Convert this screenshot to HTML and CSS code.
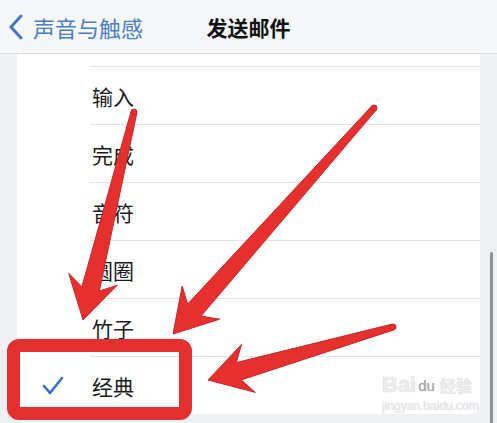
FILE: index.html
```html
<!DOCTYPE html>
<html lang="zh-CN">
<head>
  <meta charset="UTF-8">
  <title>发送邮件</title>
  <link rel="stylesheet" href="styles.css">
</head>
<body>

  <header class="nav">
    <a class="back" href="#">
      <svg class="chevron" width="16" height="26" viewBox="0 0 16 26">
        <path d="M13 2 L3 13 L13 24" fill="none" stroke="#3f78c8" stroke-width="3" stroke-linecap="round" stroke-linejoin="round"/>
      </svg>
      <span>声音与触感</span>
    </a>
    <h1 class="title">发送邮件</h1>
    <div></div>
  </header>

  <main class="content">
    <ul class="list">
      <li class="row top"></li>
      <li class="row"><span class="mark"></span><span class="label">输入</span></li>
      <li class="row"><span class="mark"></span><span class="label">完成</span></li>
      <li class="row"><span class="mark"></span><span class="label">音符</span></li>
      <li class="row"><span class="mark"></span><span class="label">圆圈</span></li>
      <li class="row"><span class="mark"></span><span class="label">竹子</span></li>
      <li class="row">
        <span class="mark">
          <svg width="22" height="20" viewBox="0 0 22 20">
            <path d="M2 10 L8 17 L20 2" fill="none" stroke="#3b6fd0" stroke-width="2.6" stroke-linecap="round" stroke-linejoin="round"/>
          </svg>
        </span>
        <span class="label">经典</span>
      </li>
    </ul>
  </main>

  <div class="scrollbar"></div>

  <!-- watermark and annotations drawn on top of the screenshot -->
  <div class="watermark">
    <div class="wm-top">Bai<span class="paw">du</span><span class="wm-cn">经验</span></div>
    <div class="wm-url">jingyan.baidu.com</div>
  </div>

  <div class="highlight"></div>
  <svg class="arrows" width="497" height="423" viewBox="0 0 497 423">
    <g fill="#e5302e" stroke="#c9262a" stroke-width="1" stroke-linejoin="round">
      <path d="M131.1 111.3 L81.9 286.8 L68.7 273.3 L83 320 L117.3 285.2 L99.3 291 L136.9 112.7 Z"/>
      <circle cx="134" cy="112" r="3"/>
      <path d="M371.8 106 L187.6 304.1 L182.2 286 L173 334 L219.6 319.2 L201 316.1 L376.2 110 Z"/>
      <circle cx="374" cy="108" r="3"/>
      <path d="M392.2 324.1 L236.3 362.6 L241.5 344.4 L208 380 L255.3 392.4 L241.3 379.9 L393.8 329.9 Z"/>
      <circle cx="393" cy="327" r="3"/>
    </g>
  </svg>

</body>
</html>
```

FILE: styles.css
```css
body {
  margin: 0;
  width: 497px;
  height: 423px;
  overflow: hidden;
  position: relative;
  background: #eef0f3;
  font-family: "Noto Sans CJK SC", "Noto Sans", sans-serif;
  color: #1b1b1b;
}

.nav {
  height: 53px;
  display: grid;
  grid-template-columns: 1fr auto 1fr;
  align-items: center;
  background: #f6f7f8;
  border-bottom: 1px solid #dcdde0;
}
.back {
  display: flex;
  align-items: center;
  gap: 9px;
  padding-left: 8px;
  color: #4a7dc2;
  font-size: 22px;
  text-decoration: none;
}
.chevron {
  display: block;
}
.title {
  margin: 0;
  font-size: 21px;
  font-weight: bold;
  color: #111;
}

.content {
  padding: 0 17px;
}
.list {
  list-style: none;
  margin: 0;
  padding: 0;
  background: #fff;
  border-radius: 0 0 11px 11px;
}
.row {
  display: flex;
  height: 58px;
}
.row.top {
  height: 12px;
}
.mark {
  width: 73px;
  flex: none;
  display: flex;
  align-items: center;
  padding-left: 25px;
  box-sizing: border-box;
}
.mark svg {
  display: block;
  margin-top: 2px;
}
.label {
  flex: 1;
  display: flex;
  align-items: center;
  padding-left: 2px;
  border-top: 1px solid #e3e3e6;
  font-size: 21px;
}

.watermark {
  position: absolute;
  left: 382px;
  top: 374px;
  color: #ececee;
  text-shadow: 0 0 1px #c4c4c8;
  line-height: 1;
}
.wm-top {
  display: flex;
  align-items: center;
  font-family: "Liberation Sans", sans-serif;
  font-size: 22px;
  font-weight: bold;
}
.paw {
  color: #a4a4a8;
  font-size: 15px;
  font-weight: normal;
  margin: 0 5px 0 2px;
}
.wm-cn {
  font-family: "Noto Sans CJK SC", sans-serif;
  font-size: 16px;
}
.wm-url {
  margin-top: 4px;
  font-family: "Liberation Sans", sans-serif;
  font-size: 12px;
}

.scrollbar {
  position: absolute;
  right: 4px;
  top: 252px;
  width: 3px;
  height: 180px;
  border-radius: 2px;
  background: #8d9096;
}

.highlight {
  position: absolute;
  left: 7px;
  top: 339px;
  width: 185px;
  height: 81px;
  box-sizing: border-box;
  border: 13px solid #e3302f;
  border-radius: 12px;
}
.arrows {
  position: absolute;
  left: 0;
  top: 0;
}
```
